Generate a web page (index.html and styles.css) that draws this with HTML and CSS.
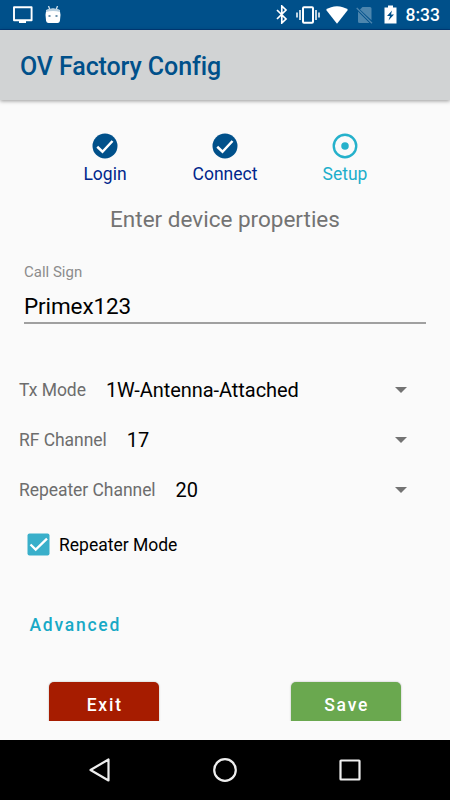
FILE: index.html
```html
<!DOCTYPE html>
<html lang="en">
<head>
<meta charset="UTF-8">
<title>OV Factory Config</title>
<link rel="stylesheet" href="styles.css">
</head>
<body>
<div class="status-bar">
  <div class="status-left">
    <svg width="21" height="18" viewBox="0 0 21 18"><path d="M2 1.200h17.600v13H2z" fill="none" stroke="#fff" stroke-width="1.900" stroke-linejoin="round"/><path d="M7 14h7v3H7z" fill="#fff"/></svg>
    <svg width="16" height="18" viewBox="0 0 16 18"><path d="M3.500 0l1.500 4M12.500 0L11 4" stroke="#d3e2ed" stroke-width="1.300"/><path d="M1.200 4Q8 1 14.800 4l.7 5-.6 6q-.3 2-2.400 2h-9Q1.400 17 1.100 15L.5 9z" fill="#fff"/><path d="M1.200 4Q8 1 14.800 4l.2 2Q8 4 1 6z" fill="#b9d0e0"/><path d="M3.500 9h2v2h-2zM10.500 9h2v2h-2z" fill="#6d93ad"/></svg>
  </div>
  <div class="status-right">
    <svg width="12" height="19" viewBox="0 0 12 19"><path d="M1 5l9 9-4.200 4V1L10 5l-9 9" fill="none" stroke="#fff" stroke-width="1.700"/></svg>
    <svg width="24" height="18" viewBox="0 0 24 18"><rect x="7" y="1.200" width="10" height="15.600" rx="1" fill="none" stroke="#fff" stroke-width="2"/><path d="M1 6.500v5M4 4v10M20 4v10M23 6.500v5" stroke="#fff" stroke-width="1.500"/></svg>
    <svg class="wifi" width="22" height="18" viewBox="0 0 22 18"><path d="M0 3.800C6-1 16-1 22 3.800L11 17.700z" fill="#fff"/></svg>
    <svg class="no-sim" width="17" height="18" viewBox="0 0 17 18"><path d="M6.500 1H14q1.500 0 1.500 1.500v11.800L4 3.500zM2 5.500L13.500 17H3.500Q2 17 2 15.500z" fill="#4d86ae"/><path d="M.7 2l15.300 15.300" stroke="#4d86ae" stroke-width="1.300"/></svg>
    <svg width="13" height="19" viewBox="0 0 13 19"><path d="M.5 2.500H4V.5h5v2h3.500v16H.5z" fill="#fff"/><path d="M8 5.500L3 11h3l-1.500 4.500L10 9.500H7z" fill="#00508a"/></svg>
    <span class="clock">8:33</span>
  </div>
</div>

<header class="toolbar">OV Factory Config</header>

<main class="content">
  <div class="steps">
    <div class="step">
      <svg width="30" height="30" viewBox="0 0 24 24"><circle cx="12" cy="12" r="10" fill="#00508a"/><path d="M5.800 12.600l4.200 4L18 8" fill="none" stroke="#fff" stroke-width="2"/></svg>
      <span>Login</span>
    </div>
    <div class="step">
      <svg width="30" height="30" viewBox="0 0 24 24"><circle cx="12" cy="12" r="10" fill="#00508a"/><path d="M5.800 12.600l4.200 4L18 8" fill="none" stroke="#fff" stroke-width="2"/></svg>
      <span>Connect</span>
    </div>
    <div class="step active">
      <svg width="30" height="30" viewBox="0 0 24 24"><circle cx="12" cy="12" r="9" fill="none" stroke="#25b1cb" stroke-width="1.900"/><circle cx="12" cy="12" r="3" fill="#25b1cb"/></svg>
      <span>Setup</span>
    </div>
  </div>

  <h1 class="heading">Enter device properties</h1>

  <div class="field">
    <div class="field-label">Call Sign</div>
    <div class="field-value">Primex123</div>
  </div>

  <div class="spinners">
    <div class="spinner">
      <span class="spinner-label">Tx Mode</span>
      <span class="spinner-value">1W-Antenna-Attached</span>
      <i class="arrow"></i>
    </div>
    <div class="spinner">
      <span class="spinner-label">RF Channel</span>
      <span class="spinner-value">17</span>
      <i class="arrow"></i>
    </div>
    <div class="spinner">
      <span class="spinner-label">Repeater Channel</span>
      <span class="spinner-value">20</span>
      <i class="arrow"></i>
    </div>
  </div>

  <div class="checkbox">
    <svg width="23" height="23" viewBox="0 0 23 23"><rect x=".5" y=".5" width="22" height="22" rx="2" fill="#39afca"/><path d="M3.500 11.500l5.200 5.100L20 5.700" fill="none" stroke="#fff" stroke-width="2.300"/></svg>
    <span>Repeater Mode</span>
  </div>

  <a class="advanced">Advanced</a>

  <div class="buttons">
    <div class="btn exit">Exit</div>
    <div class="btn save">Save</div>
  </div>
</main>

<nav class="nav-bar">
  <svg width="26" height="26" viewBox="0 0 26 26"><path d="M21.500 2.500v21L3.500 13z"/></svg>
  <svg width="26" height="26" viewBox="0 0 26 26"><circle cx="13" cy="13" r="10.800"/></svg>
  <svg width="26" height="26" viewBox="0 0 26 26"><rect x="3.500" y="3.500" width="19" height="19" rx=".5"/></svg>
</nav>
</body>
</html>
```
FILE: styles.css
```css
html, body {
    height: 100%;
    margin: 0;
}
body {
    display: flex;
    flex-direction: column;
    overflow: hidden;
    background: #fafafa;
    color: #000;
    font-family: Roboto, "Liberation Sans", sans-serif;
}
svg {
    display: block;
    flex: none;
}

/* Status bar */
.status-bar {
    display: flex;
    justify-content: space-between;
    align-items: center;
    flex: none;
    box-sizing: border-box;
    height: 30px;
    padding: 0 10px 0 12px;
    background: #00508a;
    border-bottom: 1px solid #003c7c;
}
.status-left {
    display: flex;
    gap: 12px;
}
.status-right {
    display: flex;
    align-items: center;
    gap: 8px;
}
.wifi {
    margin-left: -2px;
}
.no-sim {
    margin-right: 2.5px;
}
.clock {
    margin-left: 1px;
    color: #fff;
    font-size: 17.5px;
    font-weight: 500;
    line-height: 29px;
    padding-top: 2px;
}

.toolbar {
    position: relative;
    flex: none;
    height: 70px;
    padding-left: 20px;
    background: #d1d3d4;
    box-shadow: 0 1px 4px rgba(0, 0, 0, 0.4);
    color: #00508a;
    font-size: 25px;
    font-weight: 500;
    letter-spacing: -0.1px;
    line-height: 74px;
}
.content {
    flex: 1;
    min-height: 0;
}

/* Progress steps */
.steps {
    display: flex;
    padding: 30.5px 45px 0;
}
.step {
    display: flex;
    flex-direction: column;
    align-items: center;
    width: 120px;
    color: #00268c;
    font-size: 17.5px;
    line-height: 27px;
}
.step.active {
    color: #1caecb;
}
.heading {
    margin: 16.5px 0 0;
    color: #737373;
    font-size: 22.5px;
    font-weight: 400;
    line-height: 30px;
    text-align: center;
}

/* Text field */
.field {
    margin: 28px 24px 0;
    border-bottom: 2px solid #a0a0a0;
}
.field-label {
    color: #8c8c8c;
    font-size: 15px;
    line-height: 20px;
}
.field-value {
    padding: 9px 0 1px;
    font-size: 22.5px;
    letter-spacing: -0.1px;
    line-height: 30px;
}

/* Dropdown rows */
.spinners {
    margin-top: 41px;
}
.spinner {
    display: flex;
    align-items: center;
    height: 50px;
    padding: 0 43px 0 19px;
}
.spinner-label {
    color: #6d6d6d;
    font-size: 17.5px;
    letter-spacing: -0.05px;
}
.spinner-value {
    flex: 1;
    margin-left: 20px;
    font-size: 20px;
    letter-spacing: -0.05px;
}
.arrow {
    border-top: 6px solid #737373;
    border-left: 6px solid transparent;
    border-right: 6px solid transparent;
}
.checkbox {
    display: flex;
    align-items: center;
    gap: 9px;
    height: 30px;
    margin: 14px 0 0 27px;
    font-size: 17.5px;
}
.checkbox span {
    padding-top: 2px;
}
.advanced {
    display: block;
    margin: 53px 0 0 29.5px;
    color: #18a9c6;
    font-size: 17.5px;
    font-weight: 500;
    letter-spacing: 1.75px;
    line-height: 26px;
}

.buttons {
    display: flex;
    justify-content: space-between;
    height: 41px;
    margin-top: 42px;
    padding: 2px 49px 0 49px;
    box-sizing: border-box;
    overflow: hidden;
}
.btn {
    width: 110px;
    height: 45px;
    border-radius: 5px;
    box-shadow: 0 0 2px rgba(0, 0, 0, 0.3);
    color: #fff;
    font-size: 17.5px;
    font-weight: 500;
    letter-spacing: 1.8px;
    line-height: 47px;
    text-align: center;
    text-indent: 1.5px;
}
.exit {
    background: #a61c00;
}
.save {
    background: #6aa84f;
}

.nav-bar {
    display: flex;
    justify-content: center;
    align-items: center;
    gap: 99px;
    flex: none;
    height: 60px;
    background: #000;
}
.nav-bar svg {
    fill: none;
    stroke: #eee;
    stroke-width: 2.2;
    stroke-linejoin: round;
}
```
